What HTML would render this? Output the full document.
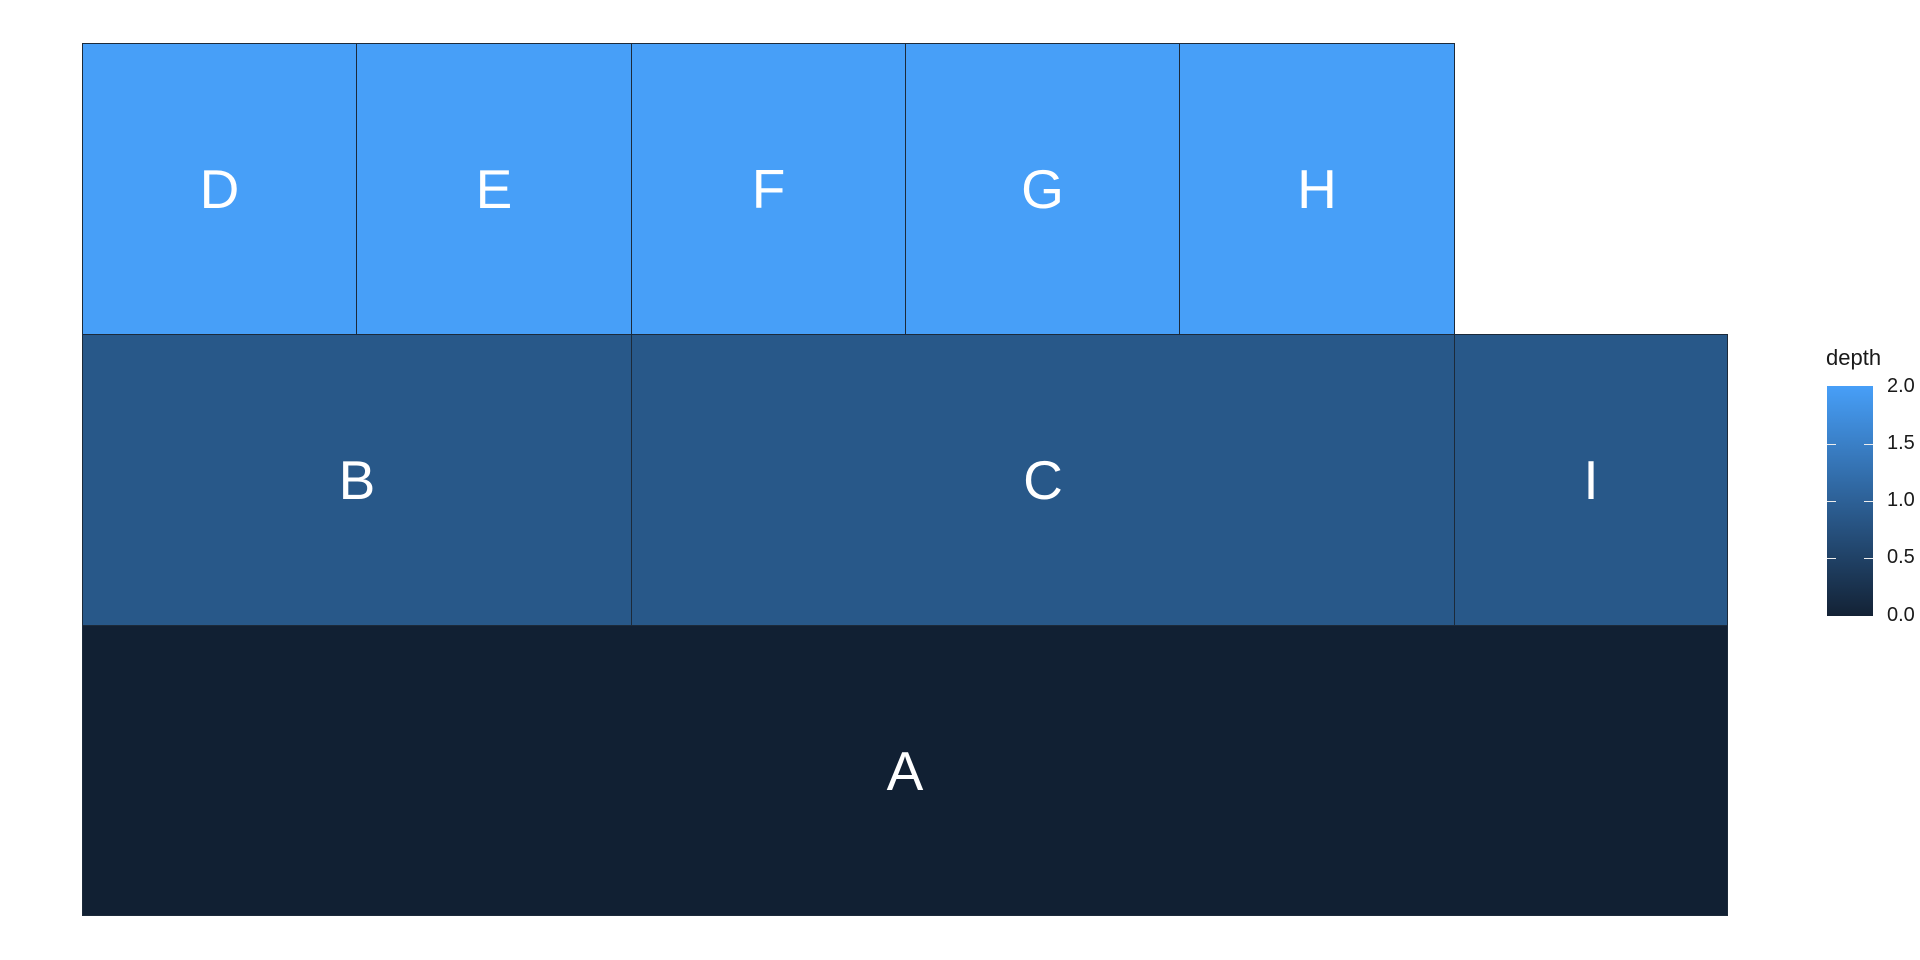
<!DOCTYPE html>
<html><head><style>
body{margin:0;width:1920px;height:960px;background:#fff;position:relative;overflow:hidden;font-family:"Liberation Sans",Arial,sans-serif}
.c{position:absolute;box-sizing:border-box;border:1px solid #1c2a3a;color:#fff;font-size:55px;display:flex;align-items:center;justify-content:center}
.l{background:#479ff8}.m{background:#285889}.d{background:#112033}
.t{position:absolute;font-size:20px;color:#1a1a1a}
.tk{position:absolute;height:1px;width:9px;background:#eee}
</style></head><body>
<div class="c l" style="left:82px;top:43px;width:275px;height:292px">D</div>
<div class="c l" style="left:356px;top:43px;width:276px;height:292px">E</div>
<div class="c l" style="left:631px;top:43px;width:275px;height:292px">F</div>
<div class="c l" style="left:905px;top:43px;width:275px;height:292px">G</div>
<div class="c l" style="left:1179px;top:43px;width:276px;height:292px">H</div>
<div class="c m" style="left:82px;top:334px;width:550px;height:292px">B</div>
<div class="c m" style="left:631px;top:334px;width:824px;height:292px">C</div>
<div class="c m" style="left:1454px;top:334px;width:274px;height:292px">I</div>
<div class="c d" style="left:82px;top:625px;width:1646px;height:291px">A</div>
<div class="t" style="left:1826px;top:345px;font-size:22px">depth</div>
<div style="position:absolute;left:1827px;top:386px;width:46px;height:230px;background:linear-gradient(#479ff8,#132235)"></div>
<div class="tk" style="left:1827px;top:444px"></div><div class="tk" style="left:1864px;top:444px"></div>
<div class="tk" style="left:1827px;top:501px"></div><div class="tk" style="left:1864px;top:501px"></div>
<div class="tk" style="left:1827px;top:558px"></div><div class="tk" style="left:1864px;top:558px"></div>
<div class="t" style="left:1887px;top:375px">2.0</div>
<div class="t" style="left:1887px;top:432px">1.5</div>
<div class="t" style="left:1887px;top:489px">1.0</div>
<div class="t" style="left:1887px;top:546px">0.5</div>
<div class="t" style="left:1887px;top:604px">0.0</div>
</body></html>
